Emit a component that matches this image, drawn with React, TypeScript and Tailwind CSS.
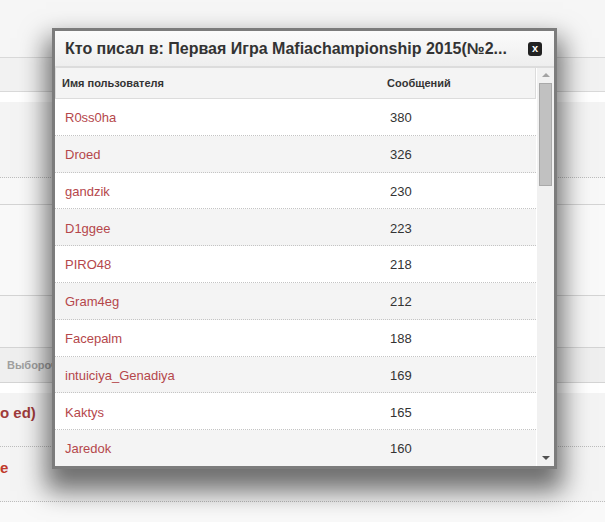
const rows = [
  { name: "R0ss0ha", count: 380 },
  { name: "Droed", count: 326 },
  { name: "gandzik", count: 230 },
  { name: "D1ggee", count: 223 },
  { name: "PIRO48", count: 218 },
  { name: "Gram4eg", count: 212 },
  { name: "Facepalm", count: 188 },
  { name: "intuiciya_Genadiya", count: 169 },
  { name: "Kaktys", count: 165 },
  { name: "Jaredok", count: 160 },
];

export default function App() {
  return (
    <div className="relative h-[522px] w-[605px] overflow-hidden bg-[#f9f9f9] font-['Liberation_Sans',Arial,sans-serif]">
      {/* page behind the overlay */}
      <div className="h-[58px] border-b border-[#d9d9d9] bg-[#f6f6f6]" />
      <div className="h-[34px] border-b border-[#d9d9d9] bg-[#f2f2f2]" />
      <div className="h-[10px] bg-white" />
      <div className="h-[76px] border-b border-dotted border-[#bdbdbd] bg-[#f4f4f4]" />
      <div className="h-[27px] border-b border-[#d4d4d4] bg-[#f8f8f8]" />
      <div className="h-[91px] border-b border-[#d4d4d4] bg-[#f9f9f9]" />
      <div className="h-[52px] border-b border-[#d4d4d4] bg-[#f6f6f6]" />
      <div className="flex h-[35px] items-center border-b border-[#d4d4d4] bg-[#efefef] pl-[7px] text-[11px] font-bold text-[#a0a0a0]">
        Выборочно
      </div>
      <div className="h-[10px] bg-white" />
      <div className="h-[54px] border-b border-dotted border-[#bdbdbd] bg-[#f4f4f4] pt-[8px]">
        <span className="text-[15px] font-bold text-[#9e3b3b]">o ed)</span>
      </div>
      <div className="h-[55px] border-b border-dotted border-[#bdbdbd] bg-[#f4f4f4] pt-[9px]">
        <span className="text-[15px] font-bold text-[#c0392b]">e</span>
      </div>

      {/* overlay dialog */}
      <div className="absolute left-[52px] top-[28px] flex h-[441px] w-[505px] flex-col border-[3px] border-[#7c7c7c] bg-white shadow-[0_16px_24px_6px_rgba(0,0,0,0.55)]">
        <div className="flex h-[35px] items-center justify-between bg-gradient-to-b from-[#fbfbfb] to-[#eeeeee] pl-[10px] pr-[12px]">
          <span className="whitespace-nowrap text-[16px] font-bold text-[#333]">
            Кто писал в: Первая Игра Mafiachampionship 2015(№2...
          </span>
          <span className="flex h-[14px] w-[14px] items-center justify-center rounded-[3px] bg-[#222] text-[11px] font-bold leading-none text-white">
            x
          </span>
        </div>
        <div className="h-[2px] bg-[#dcdcdc]" />
        <div className="flex min-h-0 flex-1">
          <div className="flex-1 overflow-hidden">
            <div className="flex h-[31px] items-center border-b border-r border-l border-[#dcdcdc] bg-[#f4f4f4] text-[11px] font-bold text-[#333]">
              <div className="w-[325px] pl-[6px]">Имя пользователя</div>
              <div className="pl-[6px]">Сообщений</div>
            </div>
            {rows.map((r, i) => (
              <div
                key={r.name}
                className={
                  "flex h-[36.8px] items-center border-b border-dotted border-[#c4c4c4] pt-[2px] text-[13px] " +
                  (i % 2 === 0 ? "bg-white" : "bg-[#f4f4f4]")
                }
              >
                <div className="w-[325px] pl-[10px] text-[#b5474b]">{r.name}</div>
                <div className="pl-[10px] text-[#333]">{r.count}</div>
              </div>
            ))}
          </div>
          <div className="flex w-[18px] flex-col items-center border-l border-white bg-[#f1f1f1]">
            <div className="mt-[5px] h-0 w-0 border-x-[4px] border-b-[4px] border-x-transparent border-b-[#a3a3a3]" />
            <div className="mt-[6px] h-[103px] w-[13px] border border-[#a9a9a9] bg-[#c1c1c1]" />
            <div className="flex-1" />
            <div className="mb-[6px] h-0 w-0 border-x-[4px] border-t-[4px] border-x-transparent border-t-[#505050]" />
          </div>
        </div>
      </div>
    </div>
  );
}
